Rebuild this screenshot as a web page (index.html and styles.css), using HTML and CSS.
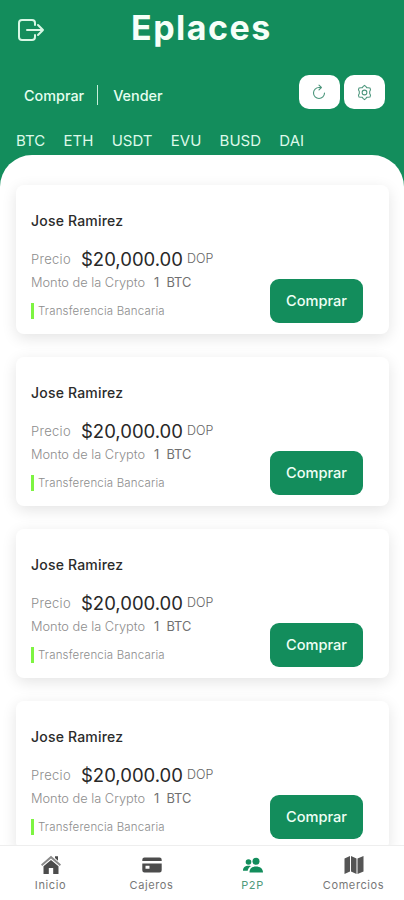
FILE: index.html
```
<!DOCTYPE html>
<html lang="es">
<head>
<meta charset="utf-8">
<title>Eplaces</title>
<link rel="stylesheet" href="styles.css">
</head>
<body>
<div class="app">
  <header class="header">
    <div class="topbar">
      <svg class="exit" viewBox="0 0 28 24" fill="none" stroke="currentColor" stroke-width="2" stroke-linecap="round" stroke-linejoin="round"><path d="M18 7V5a3 3 0 0 0-3-3H5a3 3 0 0 0-3 3v14a3 3 0 0 0 3 3h10a3 3 0 0 0 3-3v-2M10 12h16M21 7l5 5-5 5"/></svg>
      <h1 class="title">Eplaces</h1>
    </div>
    <div class="modes">
      <span class="mode">Comprar</span><span class="divider"></span><span class="mode">Vender</span>
      <div class="tools">
        <button class="tool"><svg class="refresh" viewBox="0 0 16 18" fill="none" stroke="currentColor" stroke-width="1.1" stroke-linecap="round" stroke-linejoin="round"><path d="M8 4.500a5.500 5.500 0 1 0 5.500 5.500M8 4.500h2M8 2.200 10.400 4.500 8 6.800"/></svg></button>
        <button class="tool"><svg class="gear" viewBox="0 0 18 18" fill="none" stroke="currentColor" stroke-width="1.1" stroke-linejoin="round"><path d="M7.400 2.800 9 1.400l1.600 1.400.7 1.100 1.300.1 2.200.2.6 2-.9 1.700v2.200l.9 1.700-.6 2-2.200.2-1.300.1-.7 1.100L9 16.600l-1.600-1.400-.7-1.100-1.300-.1-2.200-.2-.6-2 .9-1.700V7.900l-.9-1.700.6-2 2.200-.2 1.300-.1z"/><circle cx="9" cy="9" r="2.500"/></svg></button>
      </div>
    </div>
    <nav class="coins"><span>BTC</span><span>ETH</span><span>USDT</span><span>EVU</span><span>BUSD</span><span>DAI</span></nav>
  </header>
  <main class="panel">
    <article class="card">
      <div class="info"><h2 class="name">Jose Ramirez</h2><p class="price"><span class="label wide">Precio</span><span class="amount">$20,000.00</span><span class="currency">DOP</span></p><p class="crypto"><span class="label">Monto de la Crypto</span><span class="quantity">1&nbsp; BTC</span></p><p class="method">Transferencia Bancaria</p></div>
      <button class="buy">Comprar</button>
    </article>
    <article class="card">
      <div class="info"><h2 class="name">Jose Ramirez</h2><p class="price"><span class="label wide">Precio</span><span class="amount">$20,000.00</span><span class="currency">DOP</span></p><p class="crypto"><span class="label">Monto de la Crypto</span><span class="quantity">1&nbsp; BTC</span></p><p class="method">Transferencia Bancaria</p></div>
      <button class="buy">Comprar</button>
    </article>
    <article class="card">
      <div class="info"><h2 class="name">Jose Ramirez</h2><p class="price"><span class="label wide">Precio</span><span class="amount">$20,000.00</span><span class="currency">DOP</span></p><p class="crypto"><span class="label">Monto de la Crypto</span><span class="quantity">1&nbsp; BTC</span></p><p class="method">Transferencia Bancaria</p></div>
      <button class="buy">Comprar</button>
    </article>
    <article class="card">
      <div class="info"><h2 class="name">Jose Ramirez</h2><p class="price"><span class="label wide">Precio</span><span class="amount">$20,000.00</span><span class="currency">DOP</span></p><p class="crypto"><span class="label">Monto de la Crypto</span><span class="quantity">1&nbsp; BTC</span></p><p class="method">Transferencia Bancaria</p></div>
      <button class="buy">Comprar</button>
    </article>
  </main>
  <nav class="tabs">
    <a class="tab"><svg viewBox="0 0 22 20"><path fill="#8a8a8a" d="M11 .8 21 9.500l-1.200 1.400L11 3.400l-8.800 7.500L1 9.500z"/><path fill="#4c4c4c" d="M15 1.200h3v4.500l-3-2.600zM11 5l7.500 6.300V19h-5.300v-6H8.800v6H3.500v-7.700z"/></svg><span>Inicio</span></a>
    <a class="tab"><svg viewBox="0 0 22 20" fill="#4c4c4c"><path d="M3.500 2.500h15a2.300 2.300 0 0 1 2.200 2.300V6H1.300V4.800a2.300 2.300 0 0 1 2.200-2.300z"/><path fill-rule="evenodd" d="M1.300 8.500h19.400v6.700a2.300 2.300 0 0 1-2.200 2.300h-15a2.300 2.300 0 0 1-2.200-2.300zm3.200 2.300v3h4v-3z"/></svg><span>Cajeros</span></a>
    <a class="tab active"><svg viewBox="0 0 22 20" fill="#138d5c"><circle cx="14" cy="6.300" r="3.500"/><circle cx="6.500" cy="7" r="2.800"/><path d="M7.500 17.500c0-4 2.500-6 6.500-6s7 2 7 6zM1 15.800c0-3.500 2-5 5.500-5 .9 0 1.700.1 2.400.4-1.900 1-3 2.500-3.200 4.600z"/></svg><span>P2P</span></a>
    <a class="tab"><svg viewBox="0 0 22 20" fill="#555"><path d="M1.500 3.500 7 1v15.500l-5.500 2.500zM8 1l5.500 2.500V19L8 16.500zM14.500 3.500l6-2.500v15.500l-6 2.500z"/></svg><span>Comercios</span></a>
  </nav>
</div>
</body>
</html>
```
FILE: styles.css
```
* { box-sizing: border-box; }
body { margin: 0; font-family: Inter, "Liberation Sans", sans-serif; }
h1, h2, p { margin: 0; }
button { border: 0; padding: 0; font-family: inherit; }
.app { width: 404px; height: 900px; display: flex; flex-direction: column; overflow: hidden; background: #138d5c; }
.header { height: 155px; flex: none; color: #fff; }
.topbar { height: 68px; padding-left: 17px; display: flex; align-items: flex-start; }
.exit { width: 28px; height: 24px; margin-top: 18px; color: #d8f7e5; }
.title { margin: 6px 0 0 86px; font-size: 34px; line-height: 44px; font-weight: 700; letter-spacing: 1.5px; color: #f6fff8; }
.modes { height: 54px; padding: 0 19px 0 24px; display: flex; align-items: center; color: #e6fff0; }
.mode { font-size: 14.4px; font-weight: 500; }
.divider { width: 1px; height: 20px; margin: 0 15px 0 13px; background: #c8eeda; }
.tools { display: flex; gap: 4px; margin-left: auto; margin-top: -6px; }
.tool { width: 41px; height: 34px; border-radius: 10px; background: #fff; color: #4b957b; display: grid; place-items: center; }
.refresh { width: 16px; height: 18px; margin-right: 2px; }
.gear { width: 17px; height: 17px; margin-right: 1px; }
.coins { display: flex; padding-left: 16px; gap: 18.3px; line-height: 37px; font-size: 15px; color: #def9e9; }
.panel { flex: 1; min-height: 0; overflow: hidden; padding: 30px 15px 0 16px; background: #fff; border-radius: 32px 32px 0 0; display: flex; flex-direction: column; gap: 23px; }
.card { height: 149px; flex: none; border-radius: 8px; background: #fff; box-shadow: 0 4px 15px rgba(0,0,0,.11); display: flex; justify-content: space-between; padding: 0 26px 0 15px; }
.info { padding-top: 25px; color: #8d8d8d; white-space: nowrap; }
.name { font-size: 14px; line-height: 22px; font-weight: 500; color: #2b2b2b; letter-spacing: .2px; }
.price { margin-top: 14px; height: 26px; line-height: 27px; display: flex; }
.label { width: 113px; font-size: 12.8px; font-weight: 300; }
.wide { width: 40px; font-size: 13px; letter-spacing: .3px; }
.amount { width: 101px; margin-left: 10px; font-size: 18.5px; font-weight: 400; color: #282828; }
.currency { margin-left: 5px; font-size: 12.5px; line-height: 26px; font-weight: 300; color: #666; }
.crypto { height: 21px; line-height: 22px; display: flex; }
.quantity { margin-left: 10px; font-size: 12.8px; color: #707070; }
.method { height: 16px; line-height: 16px; margin-top: 10px; padding-left: 4px; border-left: 3px solid #7ef442; font-size: 11.5px; font-weight: 300; letter-spacing: .18px; }
.buy { width: 93px; height: 44px; margin-top: 94px; border-radius: 9px; background: #138d5c; color: #effff5; font-size: 14.6px; font-weight: 500; }
.tabs { height: 55px; flex: none; display: grid; grid-template-columns: repeat(4, 1fr); background: #fff; border-top: 1px solid #eee; }
.tab { display: flex; flex-direction: column; align-items: center; padding-top: 9px; font-size: 11px; line-height: 17px; letter-spacing: .6px; color: #777; }
.tab svg { width: 22px; height: 20px; margin-bottom: 2px; }
.tab.active { color: #509b7b; }
```
